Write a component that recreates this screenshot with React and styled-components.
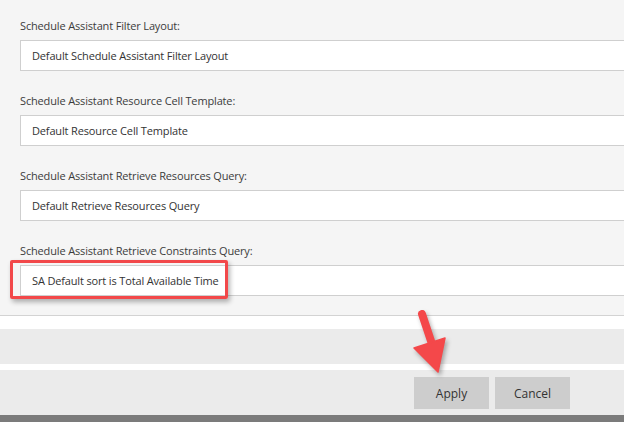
import React from "react";
import styled, { createGlobalStyle } from "styled-components";

const GlobalStyle = createGlobalStyle`
  html, body {
    margin: 0;
    padding: 0;
    background: #ffffff;
  }
  body {
    font-family: "Segoe UI", "Open Sans", "Noto Sans", sans-serif;
    color: #333333;
  }
`;

const Page = styled.div`
  position: relative;
  width: 624px;
  height: 422px;
  overflow: hidden;
  display: flex;
  flex-direction: column;
`;

const Panel = styled.div`
  background: #f5f5f5;
  border-bottom: 1px solid #d3d3d3;
  padding: 18px 0 19px 20px;
  display: flex;
  flex-direction: column;
  gap: 22px;
`;

const Field = styled.div`
  display: flex;
  flex-direction: column;
`;

const Label = styled.div`
  font-size: 11px;
  letter-spacing: -0.15px;
  line-height: 16px;
  height: 16px;
  margin-bottom: 6px;
  color: #3c3c3c;
  white-space: nowrap;
`;

const Input = styled.div`
  box-sizing: border-box;
  width: 640px;
  height: 31px;
  background: #ffffff;
  border: 1px solid #cfcfcf;
  padding: 0 11px;
  display: flex;
  align-items: center;
  font-size: 11px;
  letter-spacing: -0.15px;
  color: #333333;
  white-space: nowrap;
`;

const Spacer = styled.div`
  height: ${({ $h }) => $h}px;
  background: ${({ $bg }) => $bg};
`;

const Footer = styled.div`
  height: 45px;
  background: #ebebeb;
  display: flex;
  align-items: center;
  justify-content: flex-end;
  gap: 6px;
  padding-right: 54px;
`;

const Button = styled.button`
  width: 75px;
  height: 32px;
  border: none;
  background: #cdcdcd;
  color: #333333;
  font-family: inherit;
  font-size: 12px;
  padding: 0;
  margin-top: 1px;
`;

const BottomBar = styled.div`
  flex: 1;
  background: #7b7b7b;
`;

const Highlight = styled.div`
  position: absolute;
  left: 10px;
  top: 260px;
  width: 218px;
  height: 39px;
  box-sizing: border-box;
  border: 3px solid #f2484a;
  border-radius: 2px;
  box-shadow: 2px 3px 5px rgba(0, 0, 0, 0.3);
`;

const Arrow = styled.svg`
  position: absolute;
  left: 0;
  top: 0;
  overflow: visible;
  filter: drop-shadow(2px 3px 2px rgba(0, 0, 0, 0.3));
`;

const fields = [
  ["Schedule Assistant Filter Layout:", "Default Schedule Assistant Filter Layout"],
  ["Schedule Assistant Resource Cell Template:", "Default Resource Cell Template"],
  ["Schedule Assistant Retrieve Resources Query:", "Default Retrieve Resources Query"],
  ["Schedule Assistant Retrieve Constraints Query:", "SA Default sort is Total Available Time"],
];

export default function App() {
  return (
    <>
      <GlobalStyle />
      <Page>
        <Panel>
          {fields.map(([label, value]) => (
            <Field key={label}>
              <Label>{label}</Label>
              <Input>{value}</Input>
            </Field>
          ))}
        </Panel>
        <Spacer $h={13} $bg="#ffffff" />
        <Spacer $h={35} $bg="#ebebeb" />
        <Spacer $h={6} $bg="#ffffff" />
        <Footer>
          <Button>Apply</Button>
          <Button>Cancel</Button>
        </Footer>
        <BottomBar />
        <Highlight />
        <Arrow width="624" height="422">
          <line x1="422" y1="314" x2="432" y2="344" stroke="#f4484a" strokeWidth="8" strokeLinecap="round" />
          <polygon points="414,348 445,338 438,372" fill="#f4484a" strokeLinejoin="round" stroke="#f4484a" strokeWidth="1.5" />
        </Arrow>
      </Page>
    </>
  );
}
